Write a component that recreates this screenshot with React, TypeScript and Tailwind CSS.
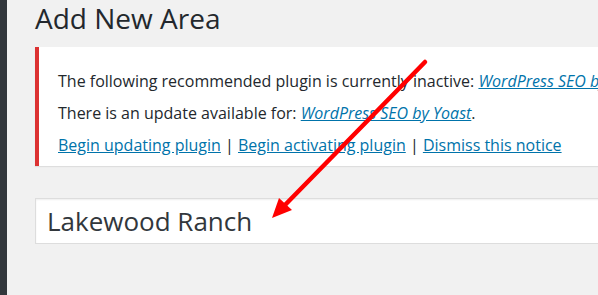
import React from "react";

export default function App() {
  const font = { fontFamily: '"Open Sans", "Noto Sans", sans-serif' };
  return (
    <div className="relative w-[598px] h-[295px] overflow-hidden bg-[#f1f1f1] flex" style={font}>
      <div className="w-[7px] shrink-0 bg-[#32373c]" />
      <div className="flex flex-col pl-[28px] w-[900px] shrink-0">
        <h1 className="text-[28px] leading-[32px] text-[#23282d] mt-[2px] whitespace-nowrap">Add New Area</h1>
        <div className="mt-[13px] h-[119px] bg-white border-l-4 border-[#dc3232] shadow-[0_1px_1px_rgba(0,0,0,0.08)] pl-[19px] pt-[23px] text-[16px] text-[#23282d] whitespace-nowrap">
          <p className="leading-[22px] mb-[10px]">
            The following recommended plugin is currently inactive:{" "}
            <a className="italic underline text-[#0073aa]">WordPress SEO by Yoast</a>.
          </p>
          <p className="leading-[22px] mb-[10px]">
            There is an update available for:{" "}
            <a className="italic underline text-[#0073aa]">WordPress SEO by Yoast</a>.
          </p>
          <p className="leading-[22px] text-[#0073aa]">
            <a className="underline">Begin updating plugin</a>
            <span className="text-[#23282d]"> | </span>
            <a className="underline">Begin activating plugin</a>
            <span className="text-[#23282d]"> | </span>
            <a className="underline">Dismiss this notice</a>
          </p>
        </div>
        <div className="mt-[32px] h-[46px] bg-white border border-[#dddddd] shadow-[inset_0_1px_2px_rgba(0,0,0,0.07)] flex items-center pl-[11px]">
          <span className="text-[26px] text-[#32373c] leading-none">Lakewood Ranch</span>
        </div>
      </div>
      <svg className="absolute left-0 top-0 pointer-events-none" width="598" height="295" viewBox="0 0 598 295">
        <line x1="425" y1="62" x2="284" y2="206" stroke="#ff0000" strokeWidth="4.5" strokeLinecap="round" />
        <polygon points="272,218 279,198 292,210" fill="#ff0000" />
      </svg>
    </div>
  );
}
